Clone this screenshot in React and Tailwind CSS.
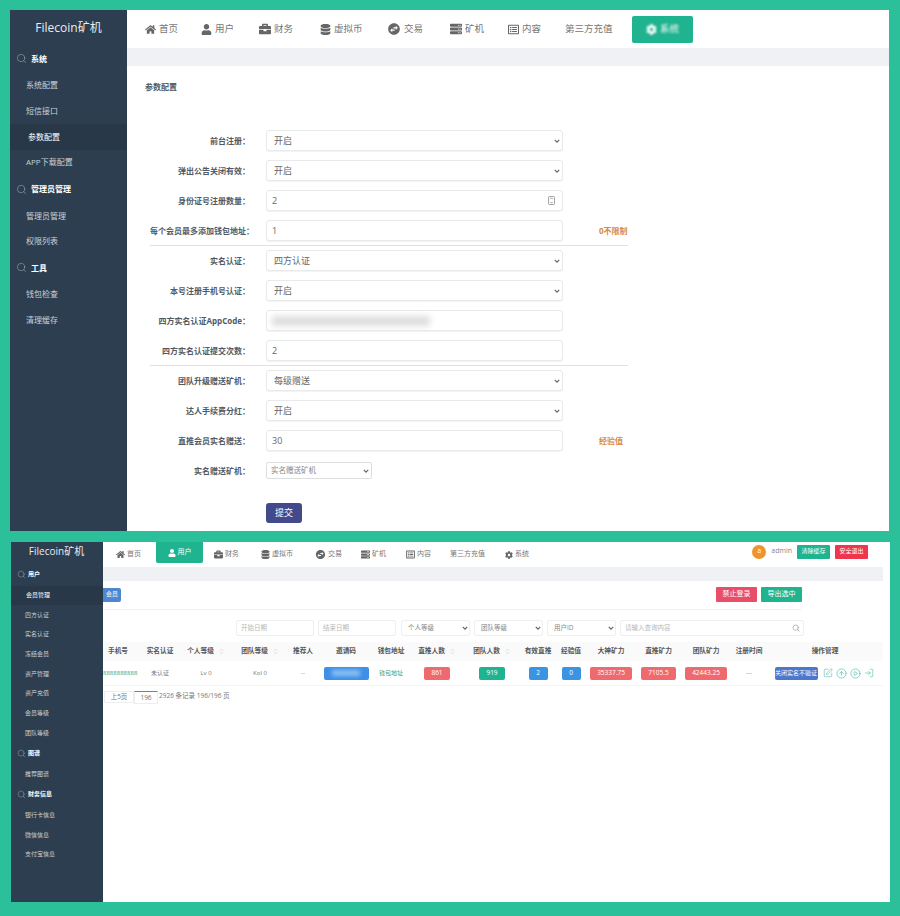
import { Search, SquarePen, CircleArrowUp, CirclePlay, LogIn, ChevronsUpDown } from "lucide-react";
import { FaHome, FaUser, FaBriefcase, FaDatabase, FaServer, FaRegListAlt, FaCog } from "react-icons/fa";
import { MdSwapHorizontalCircle } from "react-icons/md";

const TOP_TABS = [
  { label: "首页", Icon: FaHome, size: 11, width: "w-[56px]" },
  { label: "用户", Icon: FaUser, size: 11, width: "w-[58px]" },
  { label: "财务", Icon: FaBriefcase, size: 12, width: "w-[61px]" },
  { label: "虚拟币", Icon: FaDatabase, size: 11, width: "w-[67px]" },
  { label: "交易", Icon: MdSwapHorizontalCircle, size: 14, width: "w-[63px]" },
  { label: "矿机", Icon: FaServer, size: 12, width: "w-[58px]" },
  { label: "内容", Icon: FaRegListAlt, size: 11, width: "w-[57px]" },
  { label: "第三方充值", width: "w-[67px]" },
];

const BOTTOM_TABS = [
  { label: "首页", Icon: FaHome, size: 9, width: "w-[40px]" },
  { label: "用户", Icon: FaUser, size: 8, width: "w-[58px]", active: true },
  { label: "财务", Icon: FaBriefcase, size: 9, width: "w-[47px]" },
  { label: "虚拟币", Icon: FaDatabase, size: 9, width: "w-[54px]" },
  { label: "交易", Icon: MdSwapHorizontalCircle, size: 11, width: "w-[46px]" },
  { label: "矿机", Icon: FaServer, size: 9, width: "w-[45px]" },
  { label: "内容", Icon: FaRegListAlt, size: 9, width: "w-[44px]" },
  { label: "第三方充值", width: "w-[55px]" },
  { label: "系统", Icon: FaCog, size: 8, width: "w-[40px]" },
];

const TOP_MENU = [
  { title: "系统", items: ["系统配置", "短信接口", "参数配置", "APP下载配置"] },
  { title: "管理员管理", items: ["管理员管理", "权限列表"] },
  { title: "工具", items: ["钱包检查", "清理缓存"] },
];

const BOTTOM_MENU = [
  { title: "用户", items: ["会员管理", "四方认证", "实名认证", "冻结会员", "资产管理", "资产充值", "会员等级", "团队等级"] },
  { title: "图谱", items: ["推荐图谱"] },
  { title: "财务信息", items: ["银行卡信息", "微信信息", "支付宝信息"] },
];

const TABLE_COLS =
  "grid-cols-[36px_48px_44px_64px_22px_64px_26px_66px_44px_48px_18px_62px_33px_62px_24px_128px]";

const HEADERS = [
  { label: "手机号" },
  { label: "实名认证" },
  { label: "个人等级", sort: true },
  { label: "团队等级", sort: true },
  { label: "推荐人" },
  { label: "邀请码" },
  { label: "钱包地址" },
  { label: "直推人数", sort: true },
  { label: "团队人数", sort: true },
  { label: "有效直推" },
  { label: "经验值" },
  { label: "大神矿力" },
  { label: "直推矿力" },
  { label: "团队矿力" },
  { label: "注册时间" },
  { label: "操作管理" },
];

const Chevron = ({ className }) => (
  <svg viewBox="0 0 8 5" className={`absolute pointer-events-none w-[6px] h-[4px] text-[#666] ${className}`} fill="none" stroke="currentColor" strokeWidth="1.6">
    <path d="M1 1l3 3 3-3" />
  </svg>
);

const FormSelect = ({ value }) => (
  <>
    <select
      defaultValue={value}
      className="appearance-none w-full h-[21px] bg-white border border-[#e8e9ea] rounded-[3px] pl-[7px] text-[9px] text-[#666] shadow-[0_1px_1px_rgba(0,0,0,0.05)]"
    >
      <option>{value}</option>
    </select>
    <Chevron className="right-[3px]" />
  </>
);

const FormInput = ({ value }) => (
  <input
    readOnly
    defaultValue={value}
    className="w-full h-[21px] bg-white border border-[#e8e9ea] rounded-[3px] px-[5px] text-[9px] text-[#666] shadow-[0_1px_1px_rgba(0,0,0,0.05)]"
  />
);

const FormRow = ({ label, note, children }) => (
  <div className="grid grid-cols-[100px_297px_auto] gap-x-[16px] items-center h-[21px]">
    <label className="text-right text-[8px] font-bold text-[#4f5a65] whitespace-nowrap">{label}：</label>
    <div className="relative flex items-center">{children}</div>
    {note && <span className="ml-[20px] text-[8px] font-bold text-[#d98a3d]">{note}</span>}
  </div>
);

const Sidebar = ({ title, menu, activeItem, small }) => (
  <aside className={`shrink-0 bg-[#2d3e50] ${small ? "w-[92px]" : "w-[117px]"}`}>
    <div
      className={`text-center text-[#e8edf0] ${
        small ? "h-[22px] pr-[1px] text-[10px] leading-[19px]" : "h-[35px] text-[12px] leading-[36px]"
      }`}
    >
      {title}
    </div>
    {menu.map((group) => (
      <div key={group.title}>
        <div
          className={`flex items-center font-bold text-white ${
            small ? "h-[21.5px] gap-[2px] pl-[6px] text-[6px]" : "h-[27.5px] gap-[4px] pl-[6px] text-[8px]"
          }`}
        >
          <Search size={small ? 9 : 11} strokeWidth={1} className="text-[#b8c2ca]" />
          {group.title}
        </div>
        {group.items.map((item) => (
          <div
            key={item}
            className={`flex items-center text-[#c9d2d8] ${
              small ? "h-[19.7px] pl-[14px] text-[6px]" : "h-[25.7px] pl-[16px] text-[8px]"
            } ${item === activeItem ? (small ? "bg-[#293848] pl-[15px] text-white" : "bg-[#293848] pl-[18px] text-white") : ""}`}
          >
            {item}
          </div>
        ))}
      </div>
    ))}
  </aside>
);

const Chip = ({ className, children }) => (
  <span className={`flex items-center justify-center h-[13px] rounded-[2px] text-[6.5px] text-white shrink-0 ${className}`}>
    {children}
  </span>
);

const FilterBox = ({ width, children }) => (
  <div className={`flex items-center h-[16px] ${width} border border-[#eeeff0] rounded-[2px] pl-[4px] pr-[3px] text-[6.5px] text-[#b5b9bd]`}>
    {children}
  </div>
);

const FilterSelect = ({ value, first }) => (
  <div className={`relative flex items-center w-[69px] ${first ? "ml-[1px]" : ""}`}>
    <select
      defaultValue={value}
      className="appearance-none w-full h-[16px] bg-white border border-[#eeeff0] rounded-[2px] pl-[6px] text-[6.5px] text-[#888]"
    >
      <option>{value}</option>
    </select>
    <Chevron className="right-[2px]" />
  </div>
);

export default function App() {
  return (
    <div className="w-[900px] h-[916px] overflow-hidden bg-[#2cc09a] pt-[10px] pl-[10px] font-['Open_Sans','Noto_Sans_CJK_SC',sans-serif]">
      {/* Parameter settings window */}
      <div className="flex w-[879px] h-[521px] bg-white">
        <Sidebar title="Filecoin矿机" menu={TOP_MENU} activeItem="参数配置" />
        <main className="flex-1 min-w-0">
          <header className="flex items-center h-[38px] pl-[18px] text-[9.5px] text-[#777]">
            {TOP_TABS.map(({ label, Icon, size, width }) => (
              <div key={label} className={`flex items-center gap-[3px] ${width}`}>
                {Icon && <Icon size={size} className="text-[#666]" />}
                {label}
              </div>
            ))}
            <div className="flex items-center justify-center gap-[3px] w-[61px] h-[27px] mt-[1px] rounded-[2px] bg-[#1fb38f] text-white">
              <span className="flex items-center gap-[3px] blur-[1px]">
                <FaCog size={11} />
                系统
              </span>
            </div>
          </header>
          <div className="h-[18px] bg-[#eff1f5]" />
          <h2 className="mt-[15px] ml-[18px] text-[8px] leading-[12px] font-bold text-[#4f5a65]">参数配置</h2>
          <form className="w-[478px] ml-[23px] mt-[37px]">
            <div className="flex flex-col gap-[9px]">
              <FormRow label="前台注册"><FormSelect value="开启" /></FormRow>
              <FormRow label="弹出公告关闭有效"><FormSelect value="开启" /></FormRow>
              <FormRow label="身份证号注册数量">
                <FormInput value="2" />
                <svg viewBox="0 0 8 10" className="absolute right-[8px] w-[7px] h-[9px] text-[#777]" fill="none" stroke="currentColor" strokeWidth="0.8">
                  <rect x="0.5" y="0.5" width="7" height="9" rx="1" />
                  <path d="M2.5 3.5 4 2l1.5 1.5M2.5 6.5 4 8l1.5-1.5" />
                </svg>
              </FormRow>
              <FormRow label="每个会员最多添加钱包地址" note="0不限制"><FormInput value="1" /></FormRow>
            </div>
            <hr className="my-[4px] border-[#dfe1e3]" />
            <div className="flex flex-col gap-[9px]">
              <FormRow label="实名认证"><FormSelect value="四方认证" /></FormRow>
              <FormRow label="本号注册手机号认证"><FormSelect value="开启" /></FormRow>
              <FormRow label="四方实名认证AppCode">
                <FormInput value="" />
                <span className="absolute left-[6px] w-[158px] h-[10px] bg-[#dddddd] blur-[3px]" />
              </FormRow>
              <FormRow label="四方实名认证提交次数"><FormInput value="2" /></FormRow>
            </div>
            <hr className="my-[4px] border-[#dfe1e3]" />
            <div className="flex flex-col gap-[9px]">
              <FormRow label="团队升级赠送矿机"><FormSelect value="每级赠送" /></FormRow>
              <FormRow label="达人手续费分红"><FormSelect value="开启" /></FormRow>
              <FormRow label="直推会员实名赠送" note="经验值"><FormInput value="30" /></FormRow>
              <FormRow label="实名赠送矿机">
                <select
                  defaultValue="实名赠送矿机"
                  className="appearance-none w-[106px] h-[17px] bg-white border border-[#dcdee0] rounded-[2px] pl-[4px] text-[7.5px] text-[#888]"
                >
                  <option>实名赠送矿机</option>
                </select>
                <Chevron className="left-[97px]" />
              </FormRow>
            </div>
            <button
              type="button"
              className="block mt-[22px] ml-[116px] w-[36px] h-[20px] rounded-[3px] bg-[#434a8c] text-[9px] text-white"
            >
              提交
            </button>
          </form>
        </main>
      </div>

      {/* Member list window */}
      <div className="flex w-[879px] h-[360px] mt-[11px] ml-[1px] bg-white">
        <Sidebar title="Filecoin矿机" menu={BOTTOM_MENU} activeItem="会员管理" small />
        <main className="w-[780px] min-w-0 overflow-hidden">
          <header className="flex items-center h-[25px] pl-[13px] text-[7px] text-[#777]">
            {BOTTOM_TABS.map(({ label, Icon, size, width, active }) =>
              active ? (
                <div key={label} className={`flex ${width}`}>
                  <div className="flex items-center justify-center gap-[2px] w-[47px] h-[21px] -mt-[4px] rounded-b-[2px] bg-[#1fb38f] text-white">
                    <Icon size={size} />
                    {label}
                  </div>
                </div>
              ) : (
                <div key={label} className={`flex items-center gap-[2px] ${width}`}>
                  {Icon && <Icon size={size} className="text-[#666]" />}
                  {label}
                </div>
              )
            )}
            <div className="flex items-center ml-auto mr-[15px] -mt-[6px]">
              <span className="flex items-center justify-center w-[14px] h-[14px] rounded-full bg-[#f0932b] text-[7px] text-white">a</span>
              <span className="ml-[5px] text-[#888]">admin</span>
              <span className="flex items-center justify-center w-[33px] h-[14px] ml-[5px] rounded-[1px] bg-[#1fb38f] text-[6px] text-white">清除缓存</span>
              <span className="flex items-center justify-center w-[33px] h-[14px] ml-[5px] rounded-[1px] bg-[#f0364f] text-[6px] text-white">安全退出</span>
            </div>
          </header>
          <div className="h-[14px] bg-[#eff1f5]" />
          <div className="flex items-center justify-between w-[699px] h-[29px] pb-[1px] border-b border-[#f2f3f4]">
            <span className="flex items-center justify-center w-[18px] h-[14px] rounded-r-[2px] bg-[#4f86d0] text-[6px] text-white">会员</span>
            <div className="flex gap-[4px]">
              <span className="flex items-center justify-center w-[41px] h-[15px] rounded-[1px] bg-[#ea4d67] text-[7px] text-white">禁止登录</span>
              <span className="flex items-center justify-center w-[41px] h-[15px] rounded-[1px] bg-[#1fb38f] text-[7px] text-white">导出选中</span>
            </div>
          </div>
          <div className="flex items-center gap-[4px] w-[702px] h-[16px] mt-[10px] pl-[133px]">
            <FilterBox width="w-[78px]">开始日期</FilterBox>
            <FilterBox width="w-[78px]">结束日期</FilterBox>
            <FilterSelect value="个人等级" first />
            <FilterSelect value="团队等级" />
            <FilterSelect value="用户ID" />
            <FilterBox width="w-[184px] justify-between">
              请输入查询内容
              <Search size={8} className="text-[#999]" />
            </FilterBox>
          </div>

          <div className={`grid ${TABLE_COLS} items-center h-[19px] mt-[6px] -ml-[3px] bg-[#fafafa] text-[6.7px] font-bold text-[#555]`}>
            {HEADERS.map(({ label, sort }) => (
              <div key={label} className="flex items-center justify-center gap-[4px] whitespace-nowrap">
                {label}
                {sort && <ChevronsUpDown size={7} strokeWidth={1.2} className="text-[#aaa] shrink-0" />}
              </div>
            ))}
          </div>
          <div className={`grid ${TABLE_COLS} items-center h-[25px] -ml-[3px] border-b border-[#f4f4f4] text-[6px] text-[#777]`}>
            <div className="pl-[3px] text-[#3aa27f]">8888888888</div>
            <div className="text-center">未认证</div>
            <div className="text-center">Lv 0</div>
            <div className="text-center">Kol 0</div>
            <div className="text-center">--</div>
            <div className="flex justify-center"><Chip className="w-[45px] bg-[#3f8fe6]"><span className="w-[28px] h-[6px] bg-[#8cc2f2] blur-[2px]" /></Chip></div>
            <div className="flex justify-center whitespace-nowrap text-[#3aa27f]">钱包地址</div>
            <div className="flex justify-center"><Chip className="w-[26px] bg-[#ef6a6f]">861</Chip></div>
            <div className="flex justify-center"><Chip className="w-[26px] bg-[#1fb38f]">919</Chip></div>
            <div className="flex justify-center"><Chip className="w-[19px] bg-[#3b93e4]">2</Chip></div>
            <div className="flex justify-center"><Chip className="w-[19px] bg-[#3b93e4]">0</Chip></div>
            <div className="flex justify-center"><Chip className="w-[42px] bg-[#ef6a6f]">35337.75</Chip></div>
            <div className="flex justify-center"><Chip className="w-[35px] bg-[#ef6a6f]">7105.5</Chip></div>
            <div className="flex justify-center"><Chip className="w-[42px] bg-[#ef6a6f]">42443.25</Chip></div>
            <div className="text-center">---</div>
            <div className="flex items-center justify-center pr-[2px] text-[#3bb8a0]">
              <Chip className="w-[43px] mr-[5px] bg-[#4a78cc] text-[6px] whitespace-nowrap">关闭实名不验证</Chip>
              <SquarePen size={10} strokeWidth={1.3} />
              <CircleArrowUp size={11} strokeWidth={1.3} className="ml-[3px]" />
              <CirclePlay size={11} strokeWidth={1.3} className="ml-[3px]" />
              <LogIn size={10} strokeWidth={1.3} className="ml-[3px]" />
            </div>
          </div>
          <div className="flex items-start h-[13px] mt-[5px] text-[6.5px] text-[#777]">
            <span className="flex items-center justify-center w-[30px] h-[12px] ml-[1px] border border-[#eee]">上5页</span>
            <span className="flex items-center justify-center w-[24px] h-[13px] border-t border-t-[#3cb034] border-x border-b border-x-[#eee] border-b-[#eee]">196</span>
            <span className="ml-px">2926 条记录 196/196 页</span>
          </div>
        </main>
      </div>
    </div>
  );
}
